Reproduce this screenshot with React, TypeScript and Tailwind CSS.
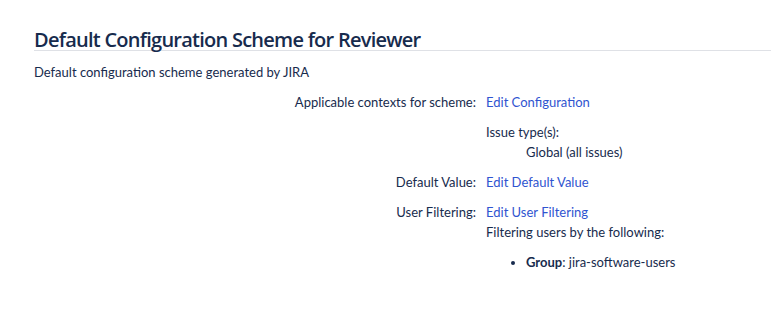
import React from 'react';

const font = { fontFamily: 'Lato, "Open Sans", sans-serif' };

interface RowProps {
  label?: string;
  children: React.ReactNode;
}

const Row: React.FC<RowProps> = ({ label, children }) => (
  <div className="flex mt-[10px]">
    <div className="w-[452px] shrink-0 pr-[10px] text-right">{label ? `${label}:` : ''}</div>
    <div className="flex-1 min-w-0">{children}</div>
  </div>
);

const Link: React.FC<{ children: React.ReactNode }> = ({ children }) => (
  <a href="#" className="text-[#2f54d0] no-underline">{children}</a>
);

export default function App() {
  return (
    <div className="bg-white w-[771px] h-[334px] pl-[34px] pt-[30px] text-[13px] leading-[20px] text-[#172b4d]" style={font}>
      <h2 className="text-[20px] leading-[20px] font-semibold border-b border-[#dfe1e6]" style={{ fontFamily: '"Open Sans", sans-serif', letterSpacing: '-0.75px' }}>
        Default Configuration Scheme for Reviewer
      </h2>
      <p className="mt-[11px]">Default configuration scheme generated by JIRA</p>
      <div>
        <Row label="Applicable contexts for scheme">
          <Link>Edit Configuration</Link>
        </Row>
        <Row>
          <div>Issue type(s):</div>
          <div className="pl-[40px]">Global (all issues)</div>
        </Row>
        <Row label="Default Value">
          <Link>Edit Default Value</Link>
        </Row>
        <Row label="User Filtering">
          <Link>Edit User Filtering</Link>
          <div>Filtering users by the following:</div>
          <ul className="list-disc pl-[40px] mt-[10px]">
            <li><b>Group</b>: jira-software-users</li>
          </ul>
        </Row>
      </div>
    </div>
  );
}
